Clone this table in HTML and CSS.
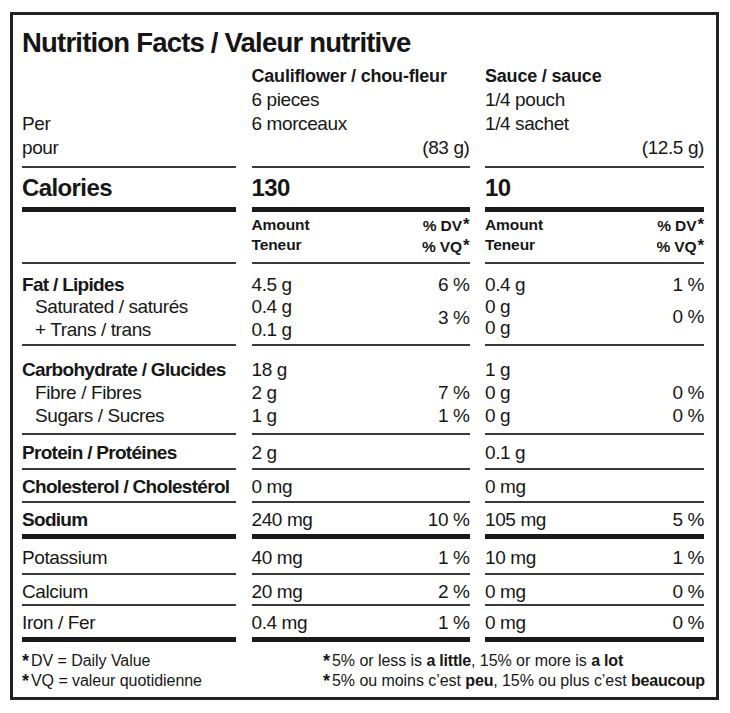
FILE: index.html
```html
<!DOCTYPE html>
<html lang="en">
<head>
<meta charset="utf-8">
<title>Nutrition Facts / Valeur nutritive</title>
<link rel="stylesheet" href="styles.css">
</head>
<body>
<div class="label">
  <h1 class="title">Nutrition Facts / Valeur nutritive</h1>
  <div class="grid">
    <div class="cell row-head per"><div>Per</div><div>pour</div></div>
    <div class="cell row-head">
      <div class="b">Cauliflower / chou-fleur</div>
      <div>6 pieces</div>
      <div>6 morceaux</div>
      <div class="r">(83 g)</div>
    </div>
    <div class="cell row-head">
      <div class="b">Sauce / sauce</div>
      <div>1/4 pouch</div>
      <div>1/4 sachet</div>
      <div class="r">(12.5 g)</div>
    </div>

    <div class="cell row-cal thick">Calories</div>
    <div class="cell row-cal thick">130</div>
    <div class="cell row-cal thick">10</div>

    <div class="cell row-amt"></div>
    <div class="cell row-amt pair">
      <div>Amount<br>Teneur</div>
      <div class="r">% DV<span class="ast">*</span><br>% VQ<span class="ast">*</span></div>
    </div>
    <div class="cell row-amt pair">
      <div>Amount<br>Teneur</div>
      <div class="r">% DV<span class="ast">*</span><br>% VQ<span class="ast">*</span></div>
    </div>

    <div class="cell row-fat">
      <div class="b">Fat / Lipides</div>
      <div class="sub">Saturated / saturés</div>
      <div class="sub">+ Trans / trans</div>
    </div>
    <div class="cell row-fat">
      <div class="pair"><span>4.5 g</span><span>6 %</span></div>
      <div class="pair"><div><div>0.4 g</div><div>0.1 g</div></div><span>3 %</span></div>
    </div>
    <div class="cell row-fat">
      <div class="pair"><span>0.4 g</span><span>1 %</span></div>
      <div class="pair"><div class="tight"><div>0 g</div><div>0 g</div></div><span>0 %</span></div>
    </div>

    <div class="cell row-carb">
      <div class="b">Carbohydrate / Glucides</div>
      <div class="sub">Fibre / Fibres</div>
      <div class="sub">Sugars / Sucres</div>
    </div>
    <div class="cell row-carb">
      <div class="pair"><span>18 g</span><span></span></div>
      <div class="pair"><span>2 g</span><span>7 %</span></div>
      <div class="pair"><span>1 g</span><span>1 %</span></div>
    </div>
    <div class="cell row-carb">
      <div class="pair"><span>1 g</span><span></span></div>
      <div class="pair"><span>0 g</span><span>0 %</span></div>
      <div class="pair"><span>0 g</span><span>0 %</span></div>
    </div>

    <div class="cell row-prot b">Protein / Protéines</div>
    <div class="cell row-prot">2 g</div>
    <div class="cell row-prot">0.1 g</div>

    <div class="cell row-chol b">Cholesterol / Cholestérol</div>
    <div class="cell row-chol">0 mg</div>
    <div class="cell row-chol">0 mg</div>

    <div class="cell row-sod thick b">Sodium</div>
    <div class="cell row-sod thick pair"><span>240 mg</span><span>10 %</span></div>
    <div class="cell row-sod thick pair"><span>105 mg</span><span>5 %</span></div>

    <div class="cell row-pot">Potassium</div>
    <div class="cell row-pot pair"><span>40 mg</span><span>1 %</span></div>
    <div class="cell row-pot pair"><span>10 mg</span><span>1 %</span></div>

    <div class="cell row-calc">Calcium</div>
    <div class="cell row-calc pair"><span>20 mg</span><span>2 %</span></div>
    <div class="cell row-calc pair"><span>0 mg</span><span>0 %</span></div>

    <div class="cell row-iron thick">Iron / Fer</div>
    <div class="cell row-iron thick pair"><span>0.4 mg</span><span>1 %</span></div>
    <div class="cell row-iron thick pair"><span>0 mg</span><span>0 %</span></div>
  </div>
  <div class="footer">
    <div>
      <div><span class="star">*</span>DV = Daily Value</div>
      <div><span class="star">*</span>VQ = valeur quotidienne</div>
    </div>
    <div class="footer-note">
      <div><span class="star">*</span>5% or less is <b>a little</b>, 15% or more is <b>a lot</b></div>
      <div><span class="star">*</span>5% ou moins c’est <b>peu</b>, 15% ou plus c’est <b>beaucoup</b></div>
    </div>
  </div>
</div>
</body>
</html>
```

FILE: styles.css
```css
html, body {
  margin: 0;
  padding: 0;
  background: #ffffff;
}

body {
  font-family: "Liberation Sans", Arial, sans-serif;
  color: #171717;
  font-size: 19px;
  letter-spacing: -0.4px;
}

.label {
  box-sizing: border-box;
  margin: 12px 0 0 10px;
  width: 709px;
  height: 688px;
  border: 3px solid #222222;
  padding: 12px 12px 0 9px;
}

.title {
  margin: 0;
  font-size: 27.5px;
  line-height: 32px;
  font-weight: bold;
  letter-spacing: -0.8px;
  color: #151515;
}

.grid {
  display: grid;
  grid-template-columns: 214px 218px 219px;
  column-gap: 15.5px;
}

.cell {
  border-bottom: 2px solid #3a3a3a;
  line-height: 23px;
}

.cell.thick {
  border-bottom: 5px solid #1a1a1a;
}

.b {
  font-weight: bold;
  letter-spacing: -0.7px;
}
.r { text-align: right; }
.sub { padding-left: 13px; }

.pair {
  display: flex;
  justify-content: space-between;
  align-items: center;
}

.tight { line-height: 21px; }

.row-head {
  line-height: 24px;
  padding: 5px 0 5.5px;
}
.row-head .b {
  font-size: 18px;
  letter-spacing: -0.2px;
}
.row-head.per {
  display: flex;
  flex-direction: column;
  justify-content: flex-end;
}

.row-cal {
  font-size: 24px;
  font-weight: bold;
  line-height: 39px;
  letter-spacing: -0.6px;
}

.row-amt {
  font-size: 15.5px;
  font-weight: bold;
  line-height: 20px;
  letter-spacing: -0.1px;
  padding: 3px 0 5px;
  align-items: flex-start;
}
.ast {
  font-size: 17px;
  vertical-align: 1px;
  margin-left: 1px;
}

.row-fat { padding: 10px 0 3px; line-height: 22.5px; }
.row-carb { padding: 12px 0 6px; }
.row-prot { padding: 6px 0 4px; }
.row-chol { padding: 5px 0 3px; }
.row-sod { padding: 5px 0 3px; }
.row-pot { padding: 7px 0 4px; }
.row-calc { padding: 5px 0 1px; }
.row-iron { padding: 5px 0 3px; }

.footer {
  display: grid;
  grid-template-columns: 301px 1fr;
  font-size: 16px;
  line-height: 20px;
  letter-spacing: -0.05px;
  padding-top: 9px;
}

.footer-note {
  white-space: nowrap;
}

.footer b {
  letter-spacing: -0.2px;
}

.star {
  font-weight: bold;
  font-size: 18px;
  vertical-align: -1px;
  margin-right: 2px;
}
```
